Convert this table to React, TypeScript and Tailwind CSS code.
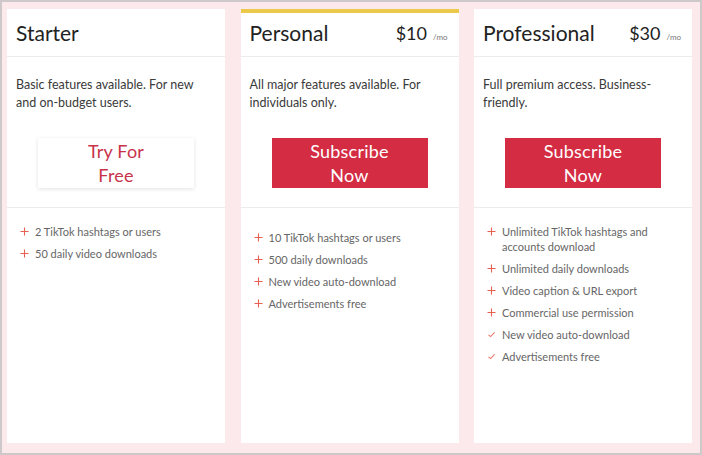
import React from "react";

type Feature = { text: string; check?: boolean };
type Plan = {
  name: string;
  price?: string;
  desc: string;
  button: string;
  primary: boolean;
  highlight?: boolean;
  listPad: string;
  features: Feature[];
};

const plans: Plan[] = [
  {
    name: "Starter",
    desc: "Basic features available. For new and on-budget users.",
    button: "Try For Free",
    primary: false,
    listPad: "pt-[16px]",
    features: [{ text: "2 TikTok hashtags or users" }, { text: "50 daily video downloads" }],
  },
  {
    name: "Personal",
    price: "$10",
    desc: "All major features available. For individuals only.",
    button: "Subscribe Now",
    primary: true,
    highlight: true,
    listPad: "pt-[22px]",
    features: [
      { text: "10 TikTok hashtags or users" },
      { text: "500 daily downloads" },
      { text: "New video auto-download" },
      { text: "Advertisements free" },
    ],
  },
  {
    name: "Professional",
    price: "$30",
    desc: "Full premium access. Business-friendly.",
    button: "Subscribe Now",
    primary: true,
    listPad: "pt-[16px]",
    features: [
      { text: "Unlimited TikTok hashtags and accounts download" },
      { text: "Unlimited daily downloads" },
      { text: "Video caption & URL export" },
      { text: "Commercial use permission" },
      { text: "New video auto-download", check: true },
      { text: "Advertisements free", check: true },
    ],
  },
];

function PlusIcon() {
  return (
    <svg width="9" height="9" viewBox="0 0 9 9" className="shrink-0">
      <path d="M4.5 0.5V8.5M0.5 4.5H8.5" stroke="#e8604f" strokeWidth="1.1" />
    </svg>
  );
}

function CheckIcon() {
  return (
    <svg width="9" height="9" viewBox="0 0 9 9" className="shrink-0">
      <path d="M1.5 4.8L3.6 6.6L7.6 2.4" stroke="#ec7a6c" strokeWidth="1.1" fill="none" />
    </svg>
  );
}

function Card({ p }: { p: Plan }) {
  const words = p.button.split(" ");
  const line1 = words.slice(0, words.length - 1).join(" ");
  const line2 = words[words.length - 1];
  return (
    <div className="flex flex-col bg-white h-[434px]">
      {p.highlight ? <div className="h-[4px] bg-[#ecc94b]" /> : null}
      <div
        className={`flex items-end justify-between border-b border-[#ececec] pl-[9px] pr-[11px] ${
          p.highlight ? "h-[44px] pb-[11px]" : "h-[48px] pb-[11px]"
        }`}
      >
        <div className="text-[21px] leading-[24px] text-[#222]">{p.name}</div>
        {p.price ? (
          <div className="flex items-baseline gap-[6px] text-[#222]">
            <span className="text-[18px] leading-[24px]">{p.price}</span>
            <span className="text-[8px] text-[#777]">/mo</span>
          </div>
        ) : null}
      </div>
      <div className="px-[9px] pt-[19px] text-[12.5px] leading-[18px] text-[#3a3a3a] h-[71px]">{p.desc}</div>
      <div className="flex justify-center pt-[10px] pb-[19px] border-b border-[#ececec]">
        <div
          className={`w-[156px] h-[50px] flex flex-col items-center justify-center text-[18px] leading-[24px] tracking-[0.2px] ${
            p.primary
              ? "bg-[#d42c43] text-white"
              : "bg-white text-[#c8334a] shadow-[0_1px_4px_rgba(0,0,0,0.12)]"
          }`}
        >
          <span>{line1}</span>
          <span>{line2}</span>
        </div>
      </div>
      <ul className={`flex flex-col gap-[7px] pl-[13px] pr-[10px] ${p.listPad}`}>
        {p.features.map((f) => (
          <li key={f.text} className="flex items-start gap-[6px] text-[11px] leading-[15px] text-[#666]">
            <span className="h-[15px] flex items-center">{f.check ? <CheckIcon /> : <PlusIcon />}</span>
            <span>{f.text}</span>
          </li>
        ))}
      </ul>
    </div>
  );
}

export default function App() {
  return (
    <div
      className="w-[702px] h-[455px] bg-[#fbe9ec] border-2 border-[#cdc9ca] pl-[5px] pr-[8px] pt-[7px] box-border"
      style={{ fontFamily: "Lato, 'Open Sans', sans-serif" }}
    >
      <div className="grid grid-cols-3 gap-[15.5px]">
        {plans.map((p) => (
          <Card key={p.name} p={p} />
        ))}
      </div>
    </div>
  );
}
